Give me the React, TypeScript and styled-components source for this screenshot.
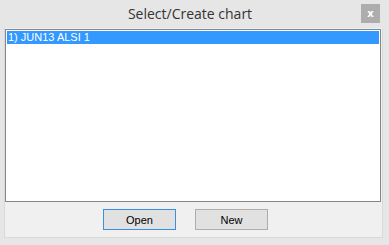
import styled, { createGlobalStyle } from "styled-components";

const GlobalStyle = createGlobalStyle`
  html, body {
    margin: 0;
    padding: 0;
    background: #e6e6e6;
  }
`;

const Window = styled.div`
  width: 389px;
  height: 245px;
  display: flex;
  flex-direction: column;
  background: #e6e6e6;
  box-sizing: border-box;
`;

const TitleBar = styled.div`
  height: 28px;
  display: grid;
  grid-template-columns: 1fr auto 1fr;
  align-items: center;
  padding-right: 9px;
`;

const Title = styled.div`
  grid-column: 2;
  font-family: "Open Sans", "Noto Sans", sans-serif;
  font-size: 14px;
  color: #333;
  margin-top: -1px;
`;

const CloseButton = styled.button`
  grid-column: 3;
  justify-self: end;
  align-self: start;
  margin-top: 4px;
  width: 19px;
  height: 19px;
  padding: 0;
  border: none;
  background: #adadad;
  color: #fff;
  font-family: "DejaVu Sans", sans-serif;
  font-size: 10px;
  font-weight: bold;
  line-height: 19px;
  text-align: center;
`;

const Panel = styled.div`
  margin: 0 6px 0 4px;
  height: 209px;
  border: 1px solid #dadada;
  border-top: none;
  background: #f0f0f0;
  display: flex;
  flex-direction: column;
`;

const ListBox = styled.div`
  margin: 1px 1px 0 0;
  height: 173px;
  box-sizing: border-box;
  border: 1px solid #828790;
  background: #fff;
  padding: 1px;
`;

const ListItem = styled.div<{ $selected?: boolean }>`
  height: 13px;
  line-height: 13px;
  padding-left: 1px;
  font-family: "Liberation Sans", Arial, sans-serif;
  font-size: 11px;
  color: ${(p) => (p.$selected ? "#fff" : "#000")};
  background: ${(p) => (p.$selected ? "#3399ff" : "transparent")};
  white-space: nowrap;
`;

const ButtonRow = styled.div`
  display: flex;
  gap: 19px;
  padding: 7px 0 0 98px;
`;

const Button = styled.button<{ $focused?: boolean }>`
  width: 73px;
  height: 21px;
  box-sizing: border-box;
  border: 1px solid ${(p) => (p.$focused ? "#3c8fe0" : "#adadad")};
  background: #e1e1e1;
  font-family: "Liberation Sans", Arial, sans-serif;
  font-size: 11px;
  color: #000;
  padding: 0;
`;

export default function App() {
  return (
    <>
      <GlobalStyle />
      <Window>
        <TitleBar>
          <Title>Select/Create chart</Title>
          <CloseButton>x</CloseButton>
        </TitleBar>
        <Panel>
          <ListBox>
            <ListItem $selected>1) JUN13 ALSI 1</ListItem>
          </ListBox>
          <ButtonRow>
            <Button $focused>Open</Button>
            <Button>New</Button>
          </ButtonRow>
        </Panel>
      </Window>
    </>
  );
}
